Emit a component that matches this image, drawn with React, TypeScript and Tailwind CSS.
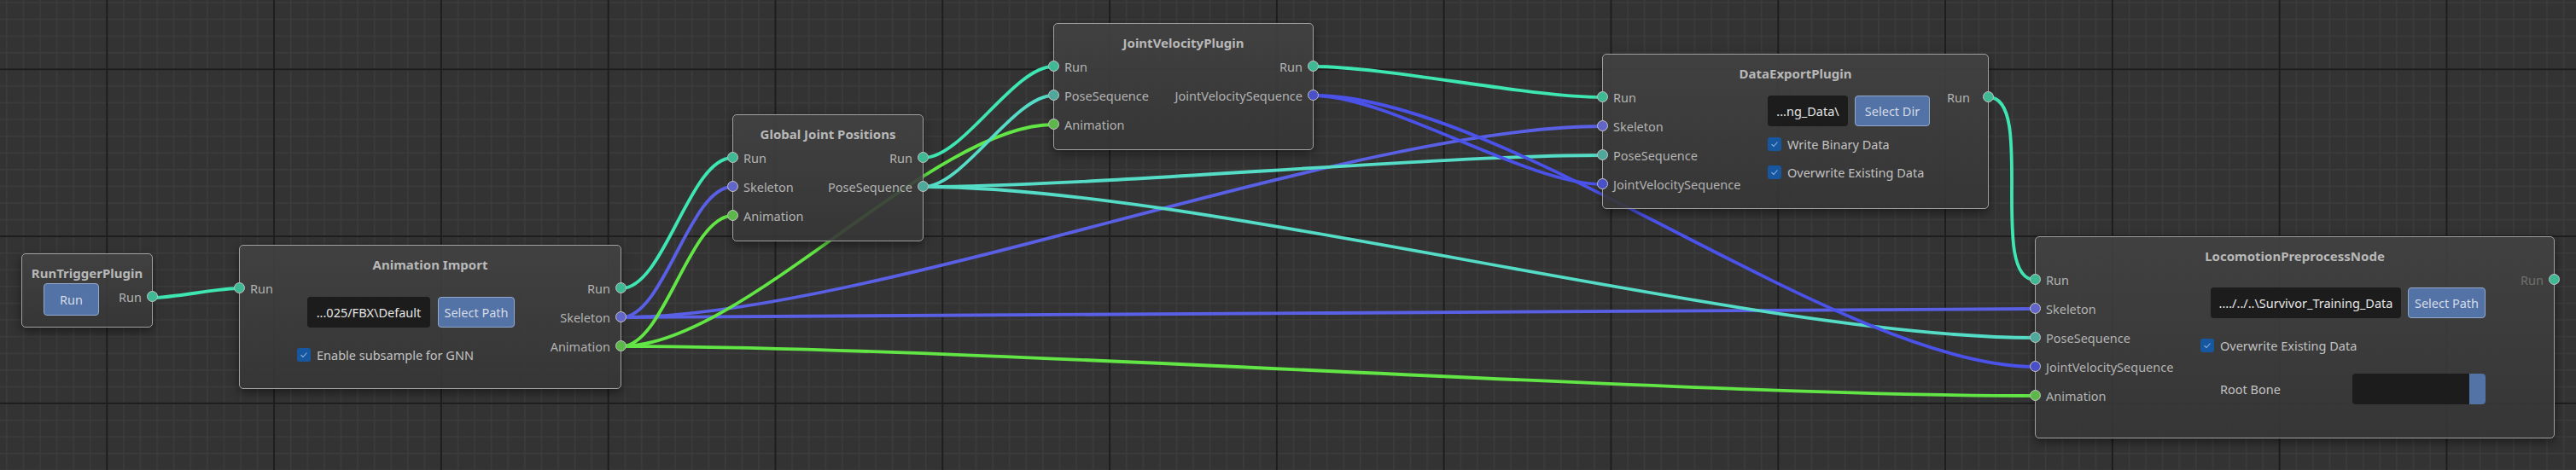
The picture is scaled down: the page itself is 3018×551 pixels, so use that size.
import React from "react";

type Wire = { x1: number; y1: number; x2: number; y2: number; color: string };

const RUN = "#3ee6b2";
const POSE = "#55dcc6";
const SKEL = "#5a60e6";
const ANIM = "#62e645";
const JVS = "#4b52ea";

const wires: Wire[] = [
  { x1: 179, y1: 349, x2: 280, y2: 338, color: RUN },
  { x1: 728, y1: 338, x2: 858, y2: 185, color: RUN },
  { x1: 728, y1: 372, x2: 858, y2: 219, color: SKEL },
  { x1: 728, y1: 372, x2: 1877, y2: 148, color: SKEL },
  { x1: 728, y1: 372, x2: 2384, y2: 362, color: SKEL },
  { x1: 728, y1: 406, x2: 858, y2: 253, color: ANIM },
  { x1: 728, y1: 406, x2: 1234, y2: 146, color: ANIM },
  { x1: 728, y1: 406, x2: 2384, y2: 464, color: ANIM },
  { x1: 1082, y1: 185, x2: 1234, y2: 78, color: RUN },
  { x1: 1082, y1: 219, x2: 1234, y2: 112, color: POSE },
  { x1: 1082, y1: 219, x2: 1877, y2: 182, color: POSE },
  { x1: 1082, y1: 219, x2: 2384, y2: 396, color: POSE },
  { x1: 1539, y1: 78, x2: 1877, y2: 114, color: RUN },
  { x1: 1539, y1: 112, x2: 1877, y2: 216, color: JVS },
  { x1: 1539, y1: 112, x2: 2384, y2: 430, color: JVS },
  { x1: 2330, y1: 114, x2: 2384, y2: 328, color: RUN },
];

function wirePath(w: Wire) {
  const len = Math.hypot(w.x2 - w.x1, w.y2 - w.y1);
  const c = len * 0.25;
  return `M ${w.x1} ${w.y1} C ${w.x1 + c} ${w.y1}, ${w.x2 - c} ${w.y2}, ${w.x2} ${w.y2}`;
}

function Canvas() {
  return (
    <svg className="absolute left-0 top-0" width="3018" height="551">
      <defs>
        <pattern id="minor" x="7.07" y="2.26" width="19.58" height="19.58" patternUnits="userSpaceOnUse">
          <rect x="0" y="0" width="1.5" height="19.58" fill="#3c3c3c" />
          <rect x="0" y="0" width="19.58" height="1.5" fill="#3c3c3c" />
        </pattern>
        <pattern id="major" x="124.3" y="80.3" width="195.8" height="195.8" patternUnits="userSpaceOnUse">
          <rect x="0" y="0" width="2" height="195.8" fill="#1d1d1d" />
          <rect x="0" y="0" width="195.8" height="2" fill="#1d1d1d" />
        </pattern>
      </defs>
      <rect width="3018" height="551" fill="#333333" />
      <rect width="3018" height="551" fill="url(#minor)" />
      <rect width="3018" height="551" fill="url(#major)" />
      {wires.map((w, i) => (
        <path key={i} d={wirePath(w)} fill="none" stroke={w.color} strokeWidth={3.8} strokeLinecap="round" />
      ))}
    </svg>
  );
}

function InPort({ label, dot }: { label: string; dot: string }) {
  return (
    <div className="relative flex h-[34px] items-center pl-[12px] whitespace-nowrap">
      <span className={`absolute -left-[7px] top-[10px] h-[13px] w-[13px] rounded-full border border-[#c4c4c4] ${dot}`} />
      {label}
    </div>
  );
}

function OutPort({ label, dot, pad = "pr-[12px]", dim = false }: { label: string; dot: string; pad?: string; dim?: boolean }) {
  return (
    <div className={`relative flex h-[34px] items-center justify-end whitespace-nowrap ${pad} ${dim ? "text-[#6f6f6f]" : ""}`}>
      {label}
      <span className={`absolute -right-[7px] top-[10px] h-[13px] w-[13px] rounded-full border border-[#c4c4c4] ${dot}`} />
    </div>
  );
}

const dotRun = "bg-[#3fb894]";
const dotPose = "bg-[#4fa89c]";
const dotSkel = "bg-[#6266c8]";
const dotAnim = "bg-[#5cb84a]";
const dotJvs = "bg-[#4950c8]";

function Title({ text }: { text: string }) {
  return (
    <div className="h-[33px] pt-[12px] text-center text-[15px] leading-[20px] font-bold text-[#b8b8b8] whitespace-nowrap">
      {text}
    </div>
  );
}

function Check({ label }: { label: string }) {
  return (
    <div className="flex h-[20px] items-center gap-[7px] whitespace-nowrap text-[#c2c2c2]">
      <span className="flex h-[16px] w-[16px] items-center justify-center rounded-[3px] bg-[#16579f]">
        <svg width="12" height="12" viewBox="0 0 12 12">
          <path d="M2.5 6.2 L5 8.5 L9.5 3.5" fill="none" stroke="#8fb3e0" strokeWidth="1.1" />
        </svg>
      </span>
      {label}
    </div>
  );
}

function Field({ text, w }: { text: string; w: string }) {
  return (
    <div className={`flex h-[36px] items-center justify-center rounded-[4px] bg-[#1c1c1c] text-[#e6e6e6] whitespace-nowrap ${w}`}>
      {text}
    </div>
  );
}

function Btn({ text, w }: { text: string; w: string }) {
  return (
    <div className={`flex h-[36px] items-center justify-center rounded-[4px] border border-[#93a8ca] bg-[#5372a6] text-[#d4dbe6] whitespace-nowrap ${w}`}>
      {text}
    </div>
  );
}

const nodeBase =
  "absolute rounded-[5px] border border-[#a0a0a0] bg-[linear-gradient(180deg,rgba(66,66,66,0.9),rgba(54,54,54,0.9))] shadow-[0_4px_12px_rgba(0,0,0,0.45)] text-[14.5px] leading-[20px] text-[#b2b2b2]";

export default function App() {
  return (
    <div className="relative h-[551px] w-[3018px] overflow-hidden bg-[#333333] font-['Noto_Sans','Open_Sans',sans-serif]">
      <Canvas />

      {/* RunTriggerPlugin */}
      <div className={`${nodeBase} left-[25px] top-[297px] h-[87px] w-[154px]`}>
        <Title text="RunTriggerPlugin" />
        <div className="flex items-start">
          <div className="pl-[25px] pt-[1px]">
            <Btn text="Run" w="w-[65px] h-[38px]" />
          </div>
          <div className="flex-1">
            <OutPort label="Run" dot={dotRun} />
          </div>
        </div>
      </div>

      {/* Animation Import */}
      <div className={`${nodeBase} left-[280px] top-[287px] h-[169px] w-[448px]`}>
        <Title text="Animation Import" />
        <div className="flex items-start">
          <div className="w-[60px]">
            <InPort label="Run" dot={dotRun} />
          </div>
          <div className="flex flex-1 flex-col pl-[7px] pt-[27px]">
            <div className="ml-[12px] flex gap-[9px]">
              <Field text={"...025/FBX\\Default"} w="w-[144px]" />
              <Btn text="Select Path" w="w-[90px]" />
            </div>
            <div className="mt-[22px]">
              <Check label="Enable subsample for GNN" />
            </div>
          </div>
          <div>
            <OutPort label="Run" dot={dotRun} />
            <OutPort label="Skeleton" dot={dotSkel} />
            <OutPort label="Animation" dot={dotAnim} />
          </div>
        </div>
      </div>

      {/* Global Joint Positions */}
      <div className={`${nodeBase} left-[858px] top-[134px] h-[149px] w-[224px]`}>
        <Title text="Global Joint Positions" />
        <div className="flex items-start justify-between">
          <div>
            <InPort label="Run" dot={dotRun} />
            <InPort label="Skeleton" dot={dotSkel} />
            <InPort label="Animation" dot={dotAnim} />
          </div>
          <div>
            <OutPort label="Run" dot={dotRun} />
            <OutPort label="PoseSequence" dot={dotPose} />
          </div>
        </div>
      </div>

      {/* JointVelocityPlugin */}
      <div className={`${nodeBase} left-[1234px] top-[27px] h-[149px] w-[305px]`}>
        <Title text="JointVelocityPlugin" />
        <div className="flex items-start justify-between">
          <div>
            <InPort label="Run" dot={dotRun} />
            <InPort label="PoseSequence" dot={dotPose} />
            <InPort label="Animation" dot={dotAnim} />
          </div>
          <div>
            <OutPort label="Run" dot={dotRun} />
            <OutPort label="JointVelocitySequence" dot={dotJvs} />
          </div>
        </div>
      </div>

      {/* DataExportPlugin */}
      <div className={`${nodeBase} left-[1877px] top-[63px] h-[182px] w-[453px]`}>
        <Title text="DataExportPlugin" />
        <div className="flex items-start">
          <div className="w-[180px]">
            <InPort label="Run" dot={dotRun} />
            <InPort label="Skeleton" dot={dotSkel} />
            <InPort label="PoseSequence" dot={dotPose} />
            <InPort label="JointVelocitySequence" dot={dotJvs} />
          </div>
          <div className="flex flex-1 flex-col pl-[13px] pt-[15px]">
            <div className="flex gap-[8px]">
              <Field text={"...ng_Data\\"} w="w-[94px]" />
              <Btn text="Select Dir" w="w-[88px]" />
            </div>
            <div className="mt-[11px] flex flex-col gap-[13px]">
              <Check label="Write Binary Data" />
              <Check label="Overwrite Existing Data" />
            </div>
          </div>
          <div>
            <OutPort label="Run" dot={dotRun} pad="pr-[21px]" />
          </div>
        </div>
      </div>

      {/* LocomotionPreprocessNode */}
      <div className={`${nodeBase} left-[2384px] top-[277px] h-[237px] w-[609px]`}>
        <Title text="LocomotionPreprocessNode" />
        <div className="flex items-start">
          <div className="w-[180px]">
            <InPort label="Run" dot={dotRun} />
            <InPort label="Skeleton" dot={dotSkel} />
            <InPort label="PoseSequence" dot={dotPose} />
            <InPort label="JointVelocitySequence" dot={dotJvs} />
            <InPort label="Animation" dot={dotAnim} />
          </div>
          <div className="flex flex-1 flex-col pt-[26px]">
            <div className="ml-[25px] flex gap-[8px]">
              <Field text={"..../../..\\Survivor_Training_Data"} w="w-[223px]" />
              <Btn text="Select Path" w="w-[91px]" />
            </div>
            <div className="ml-[13px] mt-[22px]">
              <Check label="Overwrite Existing Data" />
            </div>
            <div className="ml-[36px] mt-[23px] flex h-[36px] items-center">
              <span className="w-[155px] text-[#c2c2c2]">Root Bone</span>
              <div className="flex h-[36px] w-[156px] overflow-hidden rounded-[4px] bg-[#1c1c1c]">
                <div className="flex-1" />
                <div className="w-[19px] bg-[#5372a6]" />
              </div>
            </div>
          </div>
          <div>
            <OutPort label="Run" dot={dotRun} dim />
          </div>
        </div>
      </div>
    </div>
  );
}
